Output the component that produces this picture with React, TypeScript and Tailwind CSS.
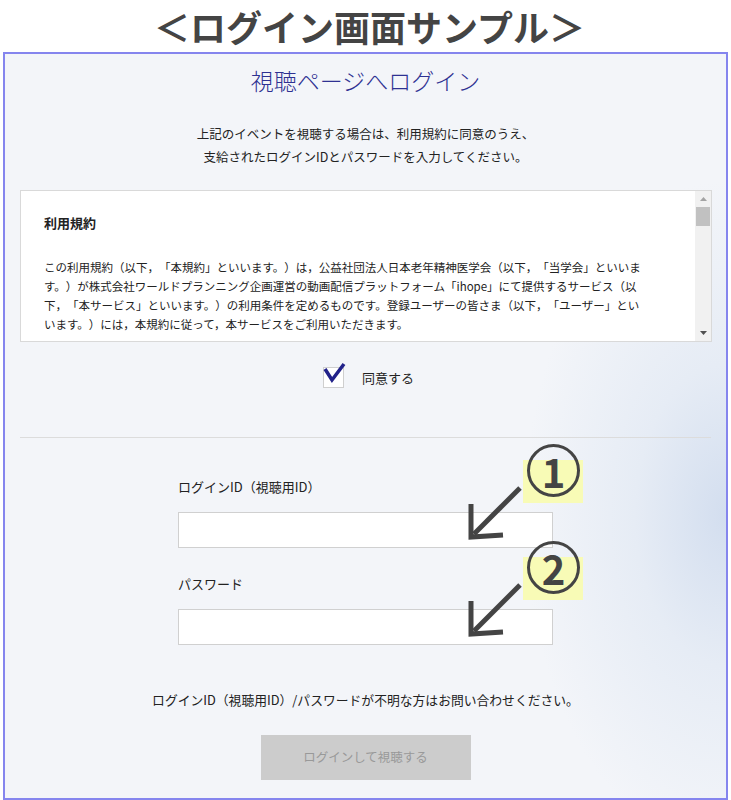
import React from "react"

function Marker({ num, top }: { num: string; top: number }) {
  return (
    <>
      <div
        className="absolute left-[518px] w-[60px] h-[43px] bg-[#f8fbb6]"
        style={{ top: top + 16 }}
      />
      <div
        className="absolute left-[522px] w-[53px] h-[53px] rounded-full border-[3px] border-[#444] flex items-center justify-center text-[40px] font-bold leading-none text-[#444]"
        style={{ top }}
      >
        {num}
      </div>
      <svg
        className="absolute left-[457px]"
        style={{ top: top + 38 }}
        width="70"
        height="60"
        viewBox="0 0 70 60"
        fill="none"
        stroke="#444"
        strokeWidth="5"
      >
        <line x1="58" y1="6" x2="12" y2="52" />
        <polyline points="9,22 9,55 41,53" strokeLinejoin="miter" />
      </svg>
    </>
  )
}

export default function App() {
  return (
    <div className="w-[731px] h-[800px] bg-white font-['Noto_Sans_CJK_JP',sans-serif] text-[#222] [text-spacing-trim:space-all]">
      <h1 className="h-[52px] flex items-center justify-center text-[36px] font-bold leading-[52px] text-[#444] pl-[8px]">
        ＜ログイン画面サンプル＞
      </h1>

      <div className="relative mx-[3px] h-[748px] border-2 border-[#8585ee] bg-[#f3f5f9] bg-[radial-gradient(28%_45%_at_100%_62%,#d3deef_0%,#e6ecf5_45%,#f3f5f9_100%)]">
        <h2 className="pt-[9px] text-center text-[23px] leading-[34px] font-light text-[#2e3192]">
          視聴ページへログイン
        </h2>

        <p className="mt-[25px] text-center text-[12.5px] leading-[23px]">
          上記のイベントを視聴する場合は、利用規約に同意のうえ、
          <br />
          支給されたログインIDとパスワードを入力してください。
        </p>

        <div className="mt-[22px] ml-[15px] mr-[14px] h-[152px] border border-[#d9d9d9] bg-white flex">
          <div className="flex-1 overflow-hidden pl-[23px] pt-[22px]">
            <h3 className="text-[13px] font-bold leading-[20px]">利用規約</h3>
            <p className="mt-[25px] text-[11.5px] leading-[19px] whitespace-nowrap">
              この利用規約（以下，「本規約」といいます。）は，公益社団法人日本老年精神医学会（以下，「当学会」といいま
              <br />
              す。）が株式会社ワールドプランニング企画運営の動画配信プラットフォーム「ihope」にて提供するサービス（以
              <br />
              下，「本サービス」といいます。）の利用条件を定めるものです。登録ユーザーの皆さま（以下，「ユーザー」とい
              <br />
              います。）には，本規約に従って，本サービスをご利用いただきます。
            </p>
          </div>
          <div className="w-[16px] bg-[#f1f1f1] flex flex-col">
            <div className="h-[16px] flex items-center justify-center">
              <svg width="7" height="4" viewBox="0 0 7 4">
                <polygon points="3.5,0 7,4 0,4" fill="#a3a3a3" />
              </svg>
            </div>
            <div className="mx-[1px] h-[19px] bg-[#c1c1c1]" />
            <div className="flex-1" />
            <div className="h-[16px] flex items-center justify-center">
              <svg width="7" height="4" viewBox="0 0 7 4">
                <polygon points="0,0 7,0 3.5,4" fill="#505050" />
              </svg>
            </div>
          </div>
        </div>

        <label className="mt-[25px] pl-[6px] h-[21px] flex items-center justify-center gap-[18px]">
          <span className="relative w-[21px] h-[21px] border border-[#cfcfcf] bg-white">
            <svg
              className="absolute left-[-1px] top-[-6px] overflow-visible"
              width="24"
              height="20"
              viewBox="0 0 24 20"
              fill="none"
              stroke="#22228a"
              strokeWidth="3.5"
            >
              <polyline points="2,7 9,18 21,2" />
            </svg>
          </span>
          <span className="text-[13px] leading-[20px]">同意する</span>
        </label>

        <div className="mt-[49px] mx-[15px] h-px bg-[#dcdcdc]" />

        <div className="mx-auto w-[375px]">
          <div className="mt-[39px] text-[13px] leading-[20px]">ログインID（視聴用ID）</div>
          <input className="mt-[15px] block w-full h-[36px] border border-[#d0d0d0] bg-white" />
          <div className="mt-[26px] text-[13px] leading-[20px]">パスワード</div>
          <input
            type="password"
            className="mt-[15px] block w-full h-[36px] border border-[#d0d0d0] bg-white"
          />
        </div>

        <p className="mt-[45px] text-center text-[12.8px] leading-[20px]">
          ログインID（視聴用ID）/パスワードが不明な方はお問い合わせください。
        </p>

        <button className="mt-[25px] mx-auto block w-[210px] h-[45px] bg-[#cccccc] text-[12.5px] text-[#999]">
          ログインして視聴する
        </button>

        <Marker num="1" top={390} />
        <Marker num="2" top={487} />
      </div>
    </div>
  )
}
